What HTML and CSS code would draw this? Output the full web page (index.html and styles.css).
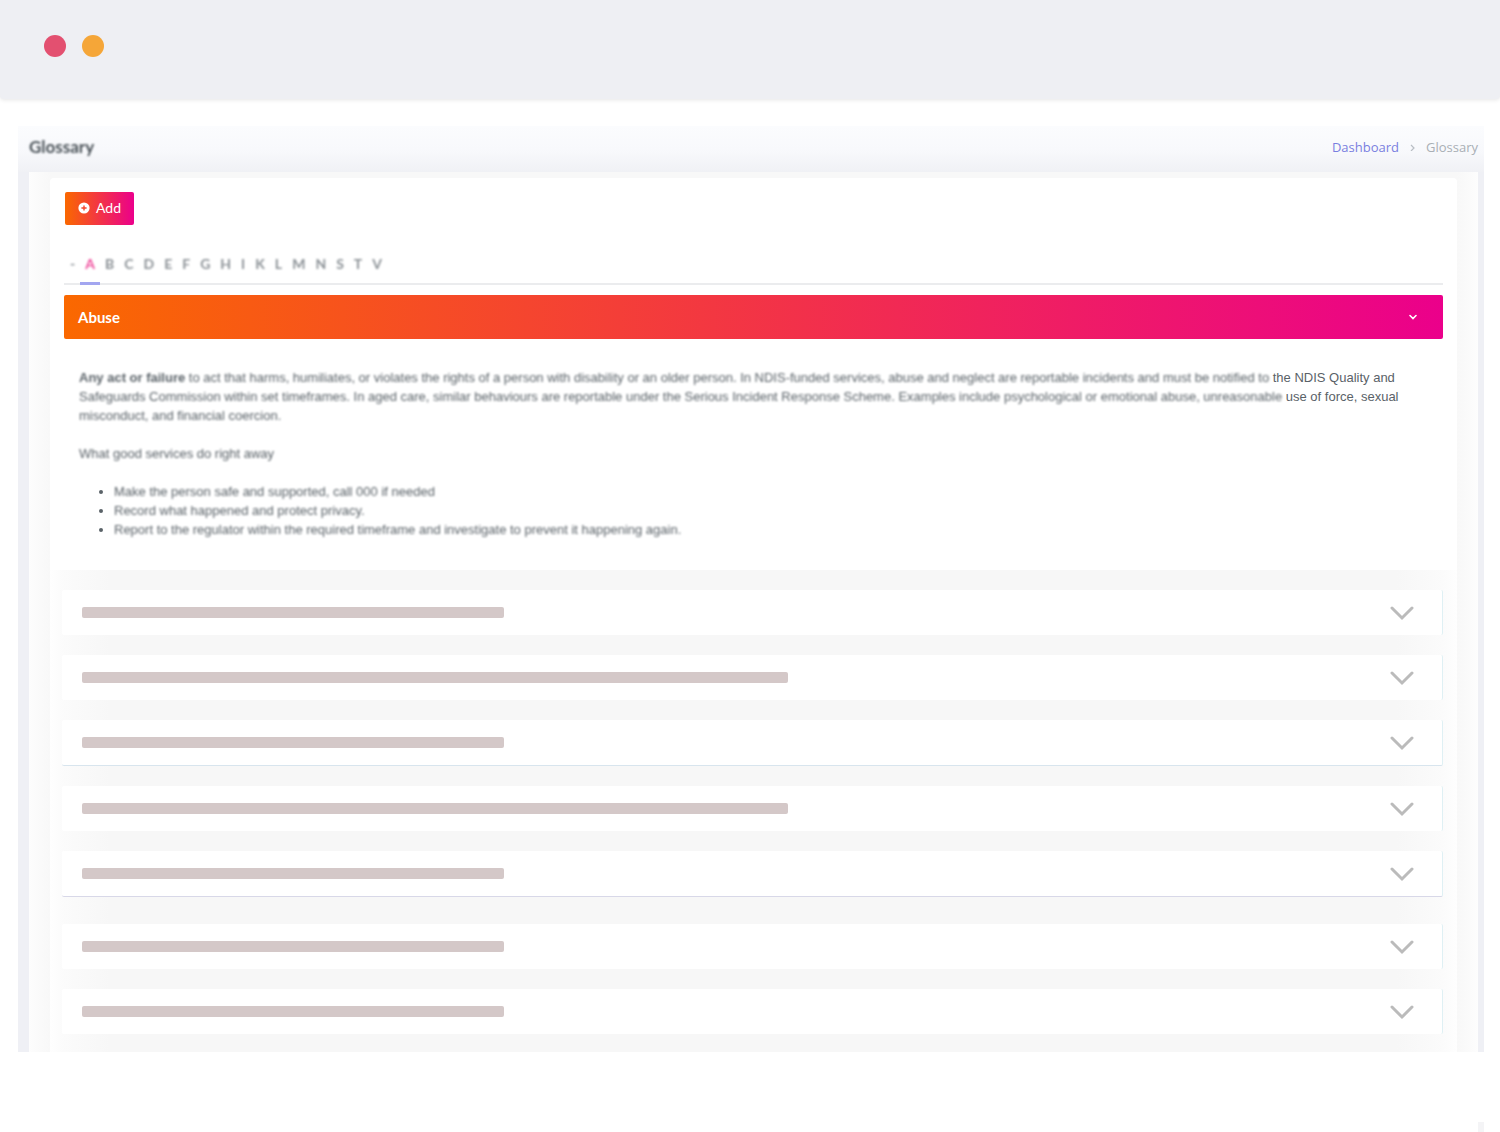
FILE: index.html
```html
<!DOCTYPE html>
<html lang="en">
<head>
    <meta charset="UTF-8">
    <meta name="viewport" content="width=device-width, initial-scale=1.0">
    <title>Glossary</title>
    <link rel="stylesheet" href="styles.css">
</head>
<body>

    <div class="topbar">
        <span class="dot dot-red"></span>
        <span class="dot dot-orange"></span>
    </div>

    <main class="app">
        <header class="page-header">
            <h1 class="blur">Glossary</h1>
            <nav class="breadcrumb">
                <a href="#">Dashboard</a>
                <svg width="5" height="8" viewBox="0 0 5 8"><path d="M1 2l3 3-3 3" fill="none" stroke="#b9bec4" stroke-width="1.2"/></svg>
                <span>Glossary</span>
            </nav>
        </header>

        <div class="outer">
            <div class="card">
                <button class="add-btn" type="button">
                    <svg width="12" height="12" viewBox="0 0 12 12"><circle cx="6" cy="6" r="5.6" fill="#fff"/><path d="M6 3.4v5.2M3.4 6h5.2" stroke="#f5452c" stroke-width="1.4"/></svg>
                    Add
                </button>

                <nav class="letters">
                    <a href="#"><span>-</span></a>
                    <a href="#" class="active"><span>A</span></a>
                    <a href="#"><span>B</span></a>
                    <a href="#"><span>C</span></a>
                    <a href="#"><span>D</span></a>
                    <a href="#"><span>E</span></a>
                    <a href="#"><span>F</span></a>
                    <a href="#"><span>G</span></a>
                    <a href="#"><span>H</span></a>
                    <a href="#"><span>I</span></a>
                    <a href="#"><span>K</span></a>
                    <a href="#"><span>L</span></a>
                    <a href="#"><span>M</span></a>
                    <a href="#"><span>N</span></a>
                    <a href="#"><span>S</span></a>
                    <a href="#"><span>T</span></a>
                    <a href="#"><span>V</span></a>
                </nav>

                <section class="entry">
                    <button class="entry-head" type="button">
                        Abuse
                        <svg width="8" height="6" viewBox="0 0 8 6"><path d="M1 1.5l3 3 3-3" fill="none" stroke="#fff" stroke-width="1.6" stroke-linecap="round"/></svg>
                    </button>
                    <div class="entry-body">
                        <p><span class="blur"><b>Any act or failure</b> to act that harms, humiliates, or violates the rights of a person with disability or an older person. In NDIS-funded services, abuse and neglect are reportable incidents and must be notified to</span> the NDIS Quality and<br>
                        <span class="blur">Safeguards Commission within set timeframes. In aged care, similar behaviours are reportable under the Serious Incident Response Scheme. Examples include psychological or emotional abuse, unreasonable</span> use of force, sexual<br>
                        <span class="blur">misconduct, and financial coercion.</span></p>
                        <p class="blur">What good services do right away</p>
                        <ul>
                            <li><span class="blur">Make the person safe and supported, call 000 if needed</span></li>
                            <li><span class="blur">Record what happened and protect privacy.</span></li>
                            <li><span class="blur">Report to the regulator within the required timeframe and investigate to prevent it happening again.</span></li>
                        </ul>
                    </div>
                </section>

                <div class="list">
                    <button class="row" type="button" aria-label="Show entry">
                        <span class="bar short"></span>
                        <svg width="24" height="16" viewBox="0 0 24 16"><path d="M2 3l10 10 10-10"/></svg>
                    </button>
                    <button class="row" type="button" aria-label="Show entry">
                        <span class="bar long"></span>
                        <svg width="24" height="16" viewBox="0 0 24 16"><path d="M2 3l10 10 10-10"/></svg>
                    </button>
                    <button class="row line-blue" type="button" aria-label="Show entry">
                        <span class="bar short"></span>
                        <svg width="24" height="16" viewBox="0 0 24 16"><path d="M2 3l10 10 10-10"/></svg>
                    </button>
                    <button class="row" type="button" aria-label="Show entry">
                        <span class="bar long"></span>
                        <svg width="24" height="16" viewBox="0 0 24 16"><path d="M2 3l10 10 10-10"/></svg>
                    </button>
                    <button class="row line-violet" type="button" aria-label="Show entry">
                        <span class="bar short"></span>
                        <svg width="24" height="16" viewBox="0 0 24 16"><path d="M2 3l10 10 10-10"/></svg>
                    </button>
                    <button class="row" type="button" aria-label="Show entry">
                        <span class="bar short"></span>
                        <svg width="24" height="16" viewBox="0 0 24 16"><path d="M2 3l10 10 10-10"/></svg>
                    </button>
                    <button class="row" type="button" aria-label="Show entry">
                        <span class="bar short"></span>
                        <svg width="24" height="16" viewBox="0 0 24 16"><path d="M2 3l10 10 10-10"/></svg>
                    </button>
                </div>
            </div>
        </div>
    </main>

    <div class="page-end"></div>

</body>
</html>
```
FILE: styles.css
```css
* {
    box-sizing: border-box;
}

body {
    font-family: Lato, sans-serif;
    font-size: 14px;
    color: #5a6268;
    background-color: #fff;
    margin: 0;
    min-height: 100vh;
    display: flex;
    flex-direction: column;
}

a {
    color: inherit;
    text-decoration: none;
}

button {
    font-family: inherit;
    border: none;
    cursor: pointer;
}

.topbar {
    height: 99px;
    padding: 35px 44px;
    display: flex;
    gap: 16px;
    background-color: #eeeff3;
    border-radius: 0 0 4px 4px;
    box-shadow: 0 1px 4px rgba(0, 0, 0, 0.1);
}

.dot {
    width: 22px;
    height: 22px;
    border-radius: 50%;
}

.dot-red {
    background-color: #e35070;
}

.dot-orange {
    background-color: #f5a638;
}

.app {
    margin: 27px 16px 0 18px;
    padding: 0 6px 0 11px;
    background-color: #eff0f5;
    background-image: linear-gradient(#fbfcfe, #f8f9fc 24px, #f0f1f5 46px);
    background-size: 100% 46px;
    background-repeat: no-repeat;
}

.page-header {
    height: 46px;
    padding-bottom: 5px;
    display: flex;
    align-items: center;
    justify-content: space-between;
}

h1 {
    font-size: 17px;
    margin: 0;
    color: #4b5359;
}

.blur {
    filter: blur(1px);
}

.breadcrumb {
    display: flex;
    align-items: center;
    gap: 11px;
    font-family: "Open Sans", sans-serif;
    font-size: 13px;
    color: #a9afb5;
}

.breadcrumb a {
    color: #7a7fe0;
}

.outer {
    padding: 6px 21px 0;
    background: linear-gradient(90deg, #fdfdfd, #f8f8f8 21px, #f8f8f8 calc(100% - 21px), #fdfdfd);
}

.card {
    padding: 14px 14px 0;
    background-color: #fff;
    border-radius: 4px 4px 0 0;
}

.add-btn {
    display: flex;
    align-items: center;
    gap: 6px;
    height: 33px;
    margin-left: 1px;
    padding: 0 13px 2px;
    font-size: 14px;
    color: #fff;
    background: linear-gradient(90deg, #fa6800, #eb008b);
    border-radius: 2px;
}

.letters {
    display: flex;
    height: 60px;
    padding: 28px 0 0 1px;
    font-size: 14px;
    font-weight: bold;
    color: #8b9196;
    border-bottom: 2px solid #ebecee;
}

.letters a {
    height: 32px;
    padding: 2px 5px 0;
    text-align: center;
}

.letters span {
    filter: blur(1px);
    display: block;
}

.letters .active {
    color: #ef4b9b;
    border-bottom: 3px solid #a3a6f0;
}

.entry {
    margin-top: 10px;
}

.entry-head {
    width: 100%;
    height: 44px;
    padding: 0 26px 0 14px;
    display: flex;
    align-items: center;
    justify-content: space-between;
    font-size: 15px;
    font-weight: bold;
    color: #fff;
    background: linear-gradient(90deg, #fa6800, #eb008b);
    border-radius: 2px;
}

.entry-body {
    padding: 29px 15px 31px;
    font-family: "Liberation Sans", sans-serif;
    font-size: 13px;
    line-height: 19px;
}

.entry-body p {
    margin: 0 0 19px;
}

.entry-body ul {
    margin: 0;
    padding-left: 35px;
}

.list {
    display: flex;
    flex-direction: column;
    gap: 20px;
    margin: 0 -14px;
    padding: 20px 14px 18px 12px;
    background: linear-gradient(90deg, #fefefe, #fbfbfb 14px, #f7f7f7 60px, #f7f7f7 calc(100% - 60px), #fbfbfb calc(100% - 14px), #fefefe);
}

.row {
    min-height: 45px;
    padding: 0 28px 0 20px;
    display: flex;
    align-items: center;
    justify-content: space-between;
    background-color: #fff;
    border-right: 1px solid #dff0f4;
    border-radius: 2px;
}

.row path {
    fill: none;
    stroke: #bbb;
    stroke-width: 3;
    stroke-linecap: round;
}

.line-blue {
    border-bottom: 1px solid #d8e5ee;
    min-height: 46px;
}

.line-violet {
    border-bottom: 1px solid #d8d8e8;
    min-height: 46px;
    margin-bottom: 7px;
}

.bar {
    height: 11px;
    background-color: #d4c8c8;
    border-radius: 2px;
}

.short {
    width: 422px;
}

.long {
    width: 706px;
}

.page-end {
    width: 6px;
    height: 10px;
    margin: auto 16px 0 auto;
    background-color: #f4f4f6;
}
```
